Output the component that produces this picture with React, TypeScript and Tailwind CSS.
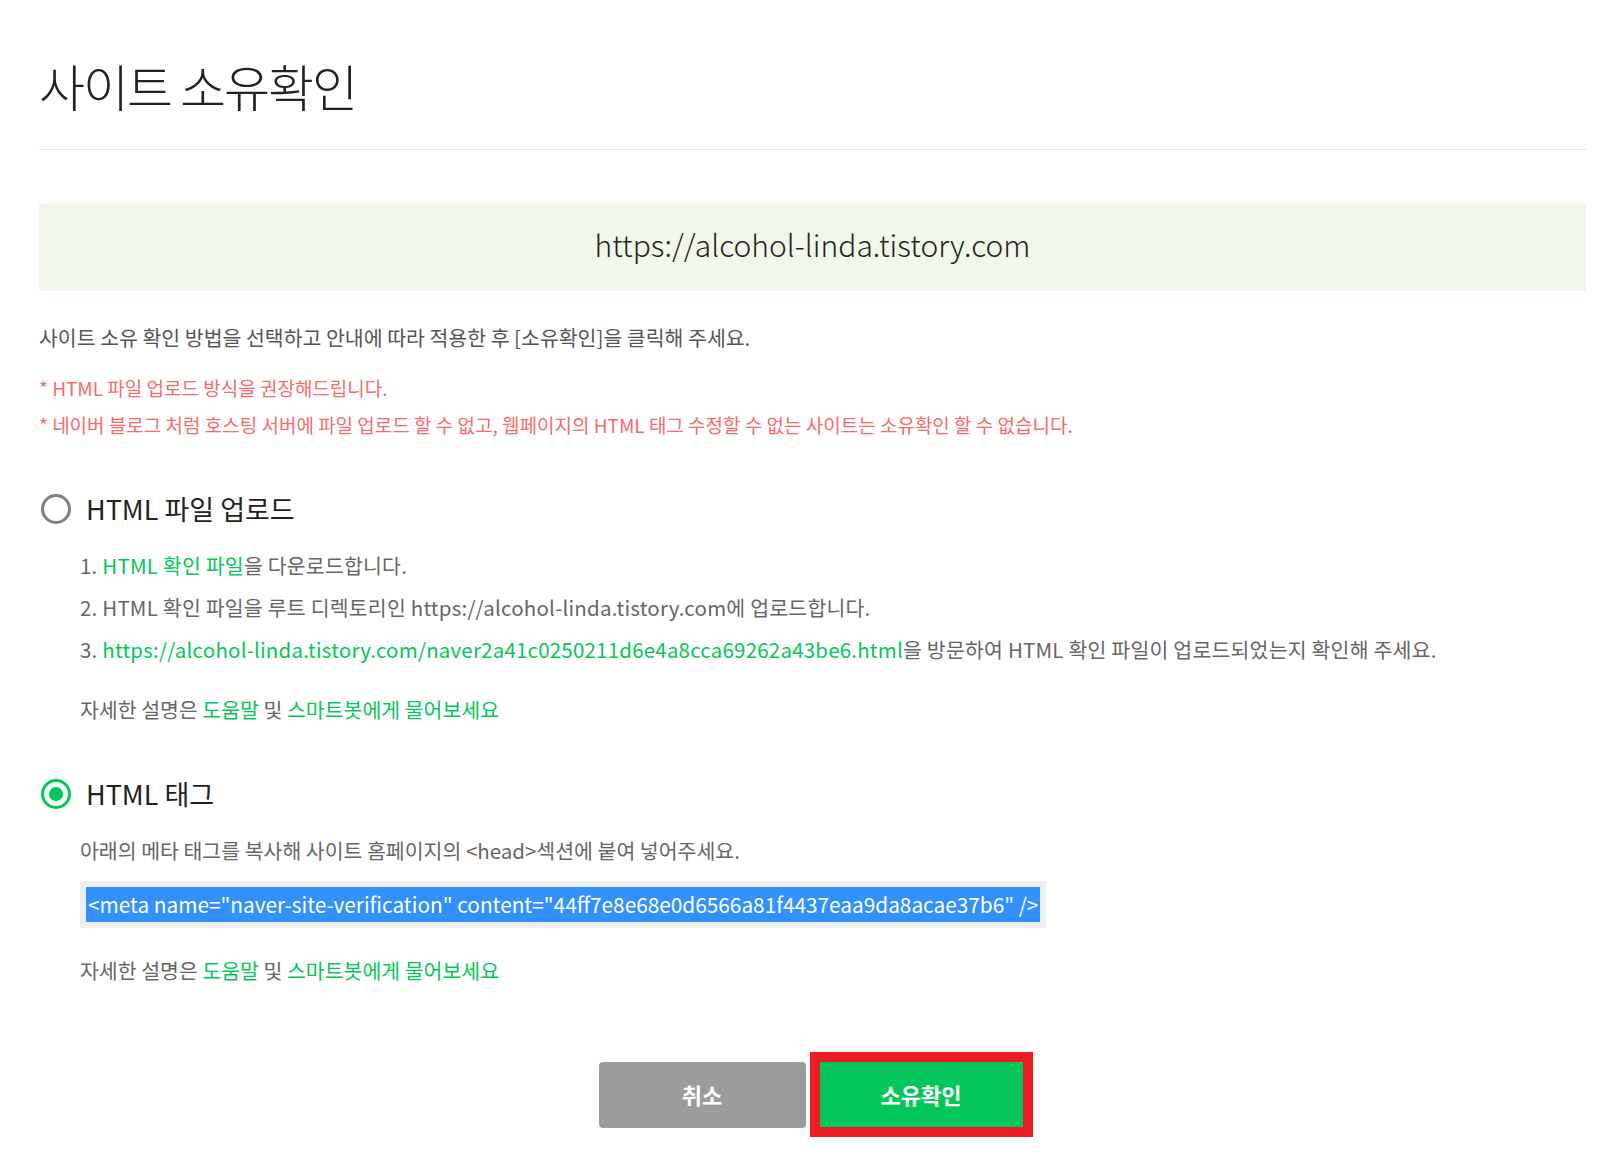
import React, { useState } from 'react';

const font = { fontFamily: '"Noto Sans CJK KR", "Noto Sans", sans-serif' };

type Method = 'file' | 'tag';

const HelpLine: React.FC = () => (
  <p className="text-[20.5px] leading-[28px] text-[#666]">
    자세한 설명은 <a className="text-[#03c75a]">도움말</a> 및{' '}
    <a className="text-[#03c75a]">스마트봇에게 물어보세요</a>
  </p>
);

const Radio: React.FC<{ checked: boolean; label: string; onClick: () => void }> = ({
  checked,
  label,
  onClick,
}) => (
  <button type="button" onClick={onClick} className="flex items-center gap-[15px] ml-[2px]">
    {checked ? (
      <span className="w-[30px] h-[30px] rounded-full border-[3px] border-[#03c75a] flex items-center justify-center">
        <span className="w-[14px] h-[14px] rounded-full bg-[#03c75a]"></span>
      </span>
    ) : (
      <span className="w-[30px] h-[30px] rounded-full border-[3px] border-[#808080]"></span>
    )}
    <span className="text-[27px] leading-[34px] text-[#222]">{label}</span>
  </button>
);

export default function App() {
  const [method, setMethod] = useState<Method>('tag');
  const site = 'https://alcohol-linda.tistory.com';

  return (
    <div className="min-h-screen bg-white pl-[39px] pr-[17px] pt-[52px]" style={font}>
      {/* title */}
      <h1 className="text-[50px] leading-[66px] font-light text-[#222] tracking-[-2px]">
        사이트 소유확인
      </h1>
      <div className="mt-[31px] h-px bg-[#e5e5e5]"></div>

      {/* site url */}
      <div className="mt-[54px] h-[87px] pb-[6px] bg-[#f1f8ea] flex items-center justify-center">
        <span className="text-[30px] font-light text-[#222]">{site}</span>
      </div>

      <p className="mt-[32px] text-[20.5px] leading-[28px] text-[#555]">
        사이트 소유 확인 방법을 선택하고 안내에 따라 적용한 후 [소유확인]을 클릭해 주세요.
      </p>

      <div className="mt-[24px] flex flex-col gap-[11px] text-[19px] leading-[26px] text-[#f76b6b]">
        <p>* HTML 파일 업로드 방식을 권장해드립니다.</p>
        <p>
          * 네이버 블로그 처럼 호스팅 서버에 파일 업로드 할 수 없고, 웹페이지의 HTML 태그 수정할 수 없는
          사이트는 소유확인 할 수 없습니다.
        </p>
      </div>

      {/* HTML file upload */}
      <div className="mt-[54px]">
        <Radio checked={method === 'file'} label="HTML 파일 업로드" onClick={() => setMethod('file')} />
        <div className="pl-[41px] mt-[25px]">
          <ol className="flex flex-col gap-[14px] text-[20.5px] leading-[28px] text-[#666] tracking-[0.2px]">
            <li>
              1. <a className="text-[#03c75a]">HTML 확인 파일</a>을 다운로드합니다.
            </li>
            <li>2. HTML 확인 파일을 루트 디렉토리인 {site}에 업로드합니다.</li>
            <li>
              3.{' '}
              <a className="text-[#03c75a]">
                {site}/naver2a41c0250211d6e4a8cca69262a43be6.html
              </a>
              을 방문하여 HTML 확인 파일이 업로드되었는지 확인해 주세요.
            </li>
          </ol>
          <div className="mt-[32px]">
            <HelpLine />
          </div>
        </div>
      </div>

      {/* HTML tag */}
      <div className="mt-[54px]">
        <Radio checked={method === 'tag'} label="HTML 태그" onClick={() => setMethod('tag')} />
        <div className="pl-[41px] mt-[25px]">
          <p className="text-[20.5px] leading-[28px] text-[#666]">
            아래의 메타 태그를 복사해 사이트 홈페이지의 &lt;head&gt;섹션에 붙여 넣어주세요.
          </p>
          <div className="mt-[17px] inline-block bg-[#efefef] px-[6px] py-[6px]">
            <div className="bg-[#3390ff] text-white text-[20.8px] leading-[35px] px-[2px]">
              &lt;meta name="naver-site-verification" content="44ff7e8e68e0d6566a81f4437eaa9da8acae37b6" /&gt;
            </div>
          </div>
          <div className="mt-[28px]">
            <HelpLine />
          </div>
        </div>
      </div>

      {/* buttons */}
      <div className="mt-[68px] pl-[6px] flex justify-center items-center gap-[4px]">
        <button
          type="button"
          className="w-[207px] h-[66px] rounded-[4px] bg-[#9b9b9b] text-white text-[22px] font-bold"
        >
          취소
        </button>
        <div className="border-[10px] border-[#ed1c24]">
          <button type="button" className="w-[203px] h-[65px] bg-[#03c75a] text-white text-[22px] font-bold block">
            소유확인
          </button>
        </div>
      </div>
    </div>
  );
}
